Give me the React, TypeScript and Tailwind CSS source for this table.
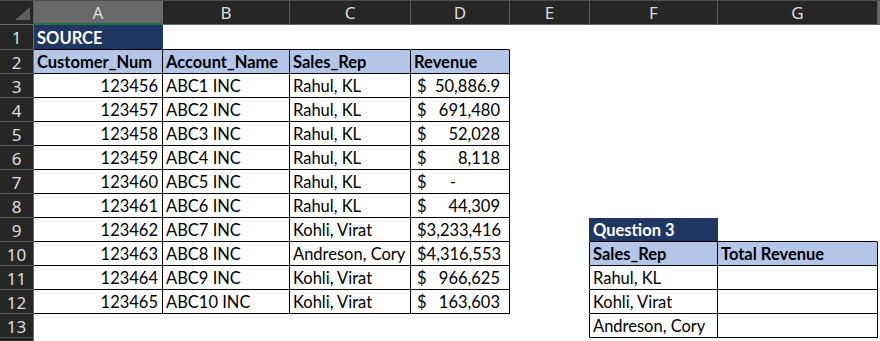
type Line = "k" | "n" | "x";

type Cell = {
  text?: string;
  kind?: "title" | "head" | "num" | "text" | "money";
  r?: Line;
  b?: Line;
};

const rightLine: Record<Line, string> = {
  k: "border-r-black",
  n: "border-r-[#203764]",
  x: "border-r-transparent",
};

const bottomLine: Record<Line, string> = {
  k: "border-b-black",
  n: "border-b-[#203764]",
  x: "border-b-transparent",
};

const columns = [
  { name: "A", width: "w-[129px]" },
  { name: "B", width: "w-[127px]" },
  { name: "C", width: "w-[121px]" },
  { name: "D", width: "w-[99px]" },
  { name: "E", width: "w-[80px]" },
  { name: "F", width: "w-[128px]" },
  { name: "G", width: "w-[160px]" },
];

const sales = [
  ["123456", "ABC1 INC", "Rahul, KL", "50,886.9"],
  ["123457", "ABC2 INC", "Rahul, KL", "691,480"],
  ["123458", "ABC3 INC", "Rahul, KL", "52,028"],
  ["123459", "ABC4 INC", "Rahul, KL", "8,118"],
  ["123460", "ABC5 INC", "Rahul, KL", "-"],
  ["123461", "ABC6 INC", "Rahul, KL", "44,309"],
  ["123462", "ABC7 INC", "Kohli, Virat", "3,233,416"],
  ["123463", "ABC8 INC", "Andreson, Cory", "4,316,553"],
  ["123464", "ABC9 INC", "Kohli, Virat", "966,625"],
  ["123465", "ABC10 INC", "Kohli, Virat", "163,603"],
];

const question: Record<number, Cell[]> = {
  9: [{ r: "n" }, { text: "Question 3", kind: "title", r: "n", b: "k" }, { b: "k" }],
  10: [
    { r: "k" },
    { text: "Sales_Rep", kind: "head", r: "k", b: "k" },
    { text: "Total Revenue", kind: "head", r: "k", b: "k" },
  ],
  11: [{ r: "k" }, { text: "Rahul, KL", kind: "text", r: "k", b: "k" }, { r: "k", b: "k" }],
  12: [{ r: "k" }, { text: "Kohli, Virat", kind: "text", r: "k", b: "k" }, { r: "k", b: "k" }],
  13: [{ r: "k" }, { text: "Andreson, Cory", kind: "text", r: "k", b: "k" }, { r: "k", b: "k" }],
};

function buildRow(n: number): Cell[] {
  let left: Cell[] = [{}, {}, {}, {}];
  if (n === 1) {
    left = [{ text: "SOURCE", kind: "title", r: "n", b: "k" }, { b: "k" }, { b: "k" }, { b: "k" }];
  } else if (n === 2) {
    left = ["Customer_Num", "Account_Name", "Sales_Rep", "Revenue"].map((t) => ({
      text: t,
      kind: "head" as const,
      r: "k" as const,
      b: "k" as const,
    }));
  } else if (n >= 3 && n <= 12) {
    const [num, acct, rep, rev] = sales[n - 3];
    left = [
      { text: num, kind: "num", r: "k", b: "k" },
      { text: acct, kind: "text", r: "k", b: "k" },
      { text: rep, kind: "text", r: "k", b: "k" },
      { text: rev, kind: "money", r: "k", b: "k" },
    ];
  }
  const right = question[n] ?? [{}, {}, {}];
  return [...left, ...right];
}

const CellBody = ({ cell }: { cell: Cell }) => {
  if (!cell.text) return null;
  if (cell.kind === "money") {
    return (
      <div className="flex w-full justify-between pl-[6px] pr-[9px]">
        <span>$</span>
        <span className={cell.text === "-" ? "pr-[44px]" : ""}>{cell.text}</span>
      </div>
    );
  }
  if (cell.kind === "num") {
    return <span className="w-full pr-[4px] text-right">{cell.text}</span>;
  }
  return <span className="truncate pl-[3px]">{cell.text}</span>;
};

const SheetCell = ({ cell, width }: { cell: Cell; width: string }) => {
  const fill =
    cell.kind === "title"
      ? "bg-[#203764] font-bold text-white"
      : cell.kind === "head"
        ? "bg-[#b4c6e7] font-bold text-black"
        : "bg-white text-black";

  return (
    <div
      className={`flex h-full shrink-0 items-end border-r border-b leading-[21px] ${width} ${fill} ${rightLine[cell.r ?? "x"]} ${bottomLine[cell.b ?? "x"]}`}
    >
      <CellBody cell={cell} />
    </div>
  );
};

export default function App() {
  const rows = Array.from({ length: 14 }, (_, i) => i + 1);

  return (
    <div className="h-[341px] w-[880px] overflow-hidden bg-white font-['Lato',sans-serif] text-[16.5px]">
      {/* column letters */}
      <div className="flex h-[25px] border-t border-t-[#4e4e4e] bg-[#262626] font-['Noto_Sans',sans-serif] text-[17px] text-[#dedede]">
        <div className="relative h-full w-[34px] shrink-0 border-r border-b border-r-[#5a5a5a] border-b-[#6a6a6a]">
          <svg className="absolute top-0 left-0" width="34" height="24" viewBox="0 0 34 24">
            <polygon points="30,6 30,19 15,19" fill="#5f5f5f" />
          </svg>
        </div>
        {columns.map((c, i) => (
          <div
            key={c.name}
            className={`flex h-full shrink-0 items-center justify-center border-r border-b leading-none ${c.width} ${
              i === 0
                ? "border-r-[#6e6e6e] border-b-2 border-b-[#217346] bg-[#686868]"
                : "border-r-[#5a5a5a] border-b-[#6a6a6a]"
            }`}
          >
            {c.name}
          </div>
        ))}
        <div className="h-full w-[2px] shrink-0 border-b border-b-[#6a6a6a] bg-[#6a6a6a]" />
      </div>

      {rows.map((n) => (
        <div key={n} className={`flex ${n === 1 ? "h-[25px]" : "h-[24px]"}`}>
          <div className="flex h-full w-[34px] shrink-0 items-center justify-center border-r border-b border-r-[#6a6a6a] border-b-[#555555] bg-[#262626] pt-[1px] font-['Noto_Sans',sans-serif] text-[17px] leading-none text-[#dedede]">
            {n < 14 ? n : null}
          </div>
          {buildRow(n).map((cell, i) => (
            <SheetCell key={i} cell={cell} width={columns[i].width} />
          ))}
        </div>
      ))}
    </div>
  );
}
